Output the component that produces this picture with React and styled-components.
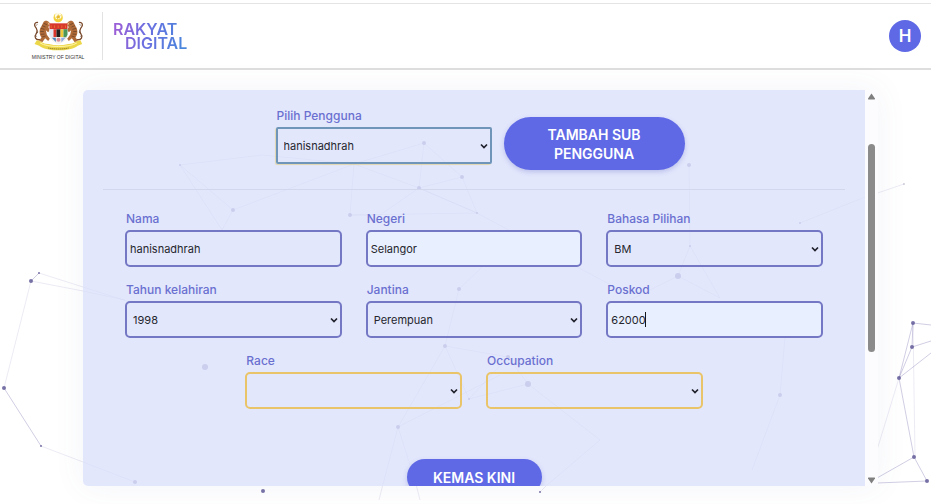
import { useId } from 'react';
import styled, { createGlobalStyle, css } from 'styled-components';

const GlobalStyle = createGlobalStyle`
  * {
    box-sizing: border-box;
  }
  body {
    margin: 0;
    background: #ffffff;
    font-family: Inter, 'Liberation Sans', sans-serif;
    overflow: hidden;
  }
`;

const Page = styled.div`
  position: relative;
  height: 100vh;
  padding: 3px 4px 18px 0;
  display: flex;
  flex-direction: column;
`;

const Network = styled.svg`
  position: absolute;
  inset: 0;
  width: 100%;
  height: 100%;
`;

const Header = styled.header`
  position: relative;
  flex: none;
  display: flex;
  align-items: center;
  height: 67px;
  padding: 0 10px 0 32px;
  background: #ffffff;
  border-top: 1px solid #e4e4e4;
  border-bottom: 2px solid #dedede;
`;

const Ministry = styled.div`
  display: flex;
  flex-direction: column;
  align-items: center;
  gap: 2px;
  width: 52px;
  font-family: 'Liberation Sans', sans-serif;
  font-size: 5px;
  line-height: 6px;
  color: #333333;
  white-space: nowrap;
`;

const Divider = styled.span`
  width: 1px;
  height: 48px;
  margin: 0 10px 0 18px;
  background: #e2e2e2;
`;

const Brand = styled.a`
  display: flex;
  flex-direction: column;
  font-size: 16px;
  line-height: 14px;
  font-weight: 600;
  text-decoration: none;
  color: transparent;
  background: linear-gradient(100deg, #9a5fd6 5%, #6a6fe0 45%, #4a86dc 95%);
  background-clip: text;

  span + span {
    padding-left: 12px;
  }
`;

const Avatar = styled.button`
  width: 32px;
  height: 32px;
  margin-left: auto;
  padding: 0;
  border: 0;
  border-radius: 50%;
  background: #5f69e6;
  color: #ffffff;
  font-family: inherit;
  font-size: 17px;
  font-weight: 600;
`;

const Panel = styled.main`
  position: relative;
  flex: 1;
  min-height: 0;
  display: flex;
  margin: 20px 53px 0 83px;
  border-radius: 5px;
  box-shadow: 0 0 32px rgba(90, 100, 160, 0.07);
`;

const Content = styled.div`
  flex: 1;
  overflow: hidden;
  padding: 18px 20px 0;
  border-radius: 5px 0 0 5px;
  background: rgba(221, 226, 251, 0.82);
`;

const Picker = styled.div`
  display: flex;
  justify-content: center;
  align-items: flex-start;
  gap: 12px;
  padding: 0 0 19px 12px;
  border-bottom: 1px solid #d3d7ee;
`;

const Form = styled.form`
  display: flex;
  flex-wrap: wrap;
  justify-content: center;
  gap: 15px 24px;
  padding: 21px 22px 0;
`;

const FieldBox = styled.div`
  display: flex;
  flex-direction: column;
  gap: 3px;
  width: ${(p) => (p.$fixed ? '216px' : 'calc((100% - 48px) / 3)')};
`;

const Label = styled.label`
  padding-left: 1px;
  font-size: 12px;
  line-height: 16px;
  font-weight: 500;
  color: #6a70d0;
  white-space: nowrap;
`;

const tones = {
  normal: css`
    border-color: #7478c4;
  `,
  missing: css`
    border-color: #e9c468;
  `,
  active: css`
    border-color: #6f95b8;
    border-radius: 2px;
    box-shadow: -1px 1px 1px rgba(226, 206, 120, 0.6);
  `,
};

const control = css`
  display: block;
  width: 100%;
  height: 37px;
  border: 2px solid;
  border-radius: 5px;
  outline: 0;
  background: ${(p) => (p.$filled ? '#e8effe' : 'transparent')};
  color: #25262e;
  font-family: inherit;
  font-size: 11px;
  ${(p) => tones[p.$tone || 'normal']}
`;

const Input = styled.input`
  ${control}
  padding: 0 3px;
`;

const Select = styled.select`
  ${control}
  padding: 0 20px 0 6px;
  appearance: none;
`;

const ControlWrap = styled.div`
  position: relative;
`;

const Chevron = styled.svg`
  position: absolute;
  top: 15px;
  right: 4px;
  pointer-events: none;
`;

const Caret = styled.span`
  position: absolute;
  top: 11px;
  left: 39px;
  width: 1px;
  height: 15px;
  background: #15161c;
`;

const Pill = styled.button`
  border: 0;
  border-radius: 27px;
  background: #5f69e6;
  color: #ffffff;
  font-family: inherit;
  font-size: 14px;
  font-weight: 600;
  line-height: 19px;
  box-shadow: 0 2px 5px rgba(80, 90, 190, 0.28);
`;

const AddButton = styled(Pill)`
  width: 181px;
  height: 53px;
  margin-top: 9px;
  padding: 0 36px;
`;

const Footer = styled.div`
  display: flex;
  justify-content: center;
  width: 100%;
  padding-top: 35px;
`;

const SaveButton = styled(Pill)`
  width: 135px;
  height: 36px;
  padding: 0;
`;

const Scrollbar = styled.div`
  display: flex;
  flex-direction: column;
  align-items: center;
  width: 13px;
  padding: 3px 0 2px;
  background: #fcfcfe;

  svg {
    flex: none;
  }
`;

const Space = styled.span`
  flex: ${(p) => p.$size};
`;

const Thumb = styled.span`
  flex: 208;
  width: 7px;
  border-radius: 4px;
  background: #8b8b8b;
`;

const nodes = [
  [31, 281, 2], [39, 273, 1], [4, 388, 2], [41, 446, 1], [135, 482, 2], [205, 367, 3],
  [263, 491, 2], [913, 323, 2], [912, 347, 2], [899, 378, 2], [914, 457, 2], [927, 481, 2],
  [424, 143, 2], [419, 188, 2], [462, 177, 2], [350, 215, 2], [233, 210, 2], [477, 213, 1],
  [689, 165, 2], [678, 276, 3], [690, 246, 1], [800, 223, 1], [459, 289, 2], [445, 346, 2],
  [398, 427, 2], [469, 399, 1], [508, 357, 2], [528, 384, 3], [780, 395, 2], [540, 492, 1],
  [180, 165, 1],
];

const panelLines = [
  'M424 143 419 188 462 177ZM424 143 354 164 262 155 180 165 233 210 354 164 350 215 477 213 419 188 354 164',
  'M419 188 380 215 350 215M419 188 477 213 620 290M180 165 222 230 233 210M462 177 477 213',
  'M689 165 690 246 678 276 610 310M678 276 720 298 690 246M800 223 860 199',
  'M459 289 445 346 508 357M459 289 500 250M445 346 469 399 528 384 508 357 469 399',
  'M445 346 398 427 500 375M398 427 383 484M398 427 416 484M528 384 600 440 547 485',
  'M785 338 780 395 752 470M83 287 127 301M83 291 125 300M83 462 135 482',
];

const faintLines = [
  'M31 281 4 388M39 273 83 287M31 281 83 291M41 446 83 462M860 199 904 184',
  'M383 484 379 500M416 484 420 500M547 485 540 492M899 378 877 450M913 323 915 457',
];

const strongLines = [
  'M31 281 39 273M4 388 41 446',
  'M913 323 912 347 899 378ZM913 323 931 325M912 347 931 341M899 378 931 353',
  'M899 378 914 457 927 481 877 483M914 457 877 478',
];

function Background() {
  return (
    <Network viewBox="0 0 935 504" preserveAspectRatio="xMidYMid slice" aria-hidden="true">
      <path d={panelLines.join('')} fill="none" stroke="#55508f" strokeOpacity="0.18" />
      <path d={faintLines.join('')} fill="none" stroke="#6c67a8" strokeOpacity="0.13" />
      <path d={strongLines.join('')} fill="none" stroke="#6c67a8" strokeOpacity="0.32" />
      {nodes.map(([x, y, r]) => (
        <circle key={`${x}-${y}`} cx={x} cy={y} r={r} fill="#625c98" fillOpacity="0.85" />
      ))}
      <circle cx="904" cy="184" r="1" fill="#625c98" fillOpacity="0.3" />
    </Network>
  );
}

function Tiger() {
  return (
    <g>
      <path
        d="M56 119C45 121 39 110 45 103C52 94 49 87 43 80C39 73 43 66 50 67"
        fill="none"
        stroke="#7b4a2c"
        strokeWidth="4"
        strokeLinecap="round"
      />
      <path
        d="M67 68C71 60 80 61 86 68L91 76L82 80L87 90L82 97L75 91L78 104L87 116L82 123L73 115L65 126L54 124L62 112C54 103 55 88 61 80Z"
        fill="#b06a38"
      />
      <path
        d="M69 70L78 74M64 77L74 81M60 85L71 88M58 94L69 95M60 103L71 102M64 111L74 108M46 76L50 73M47 99L52 96M43 108L48 109"
        stroke="#5b3924"
        strokeWidth="2"
      />
      <path d="M80 67L88 71L84 76Z" fill="#f1c58e" />
    </g>
  );
}

function Crest() {
  return (
    <svg width="51" height="40" viewBox="37 36 152 120" role="img" aria-label="Jata Negara">
      <circle cx="112" cy="53" r="14" fill="#f2d33c" />
      <circle cx="112" cy="48" r="10" fill="#fffbe2" />
      <path d="M112 42L114 47L120 46L116 51L119 56L113 54L110 59L109 53L103 52L109 49Z" fill="#e6b92b" />
      <Tiger />
      <g transform="matrix(-1 0 0 1 226 0)">
        <Tiger />
      </g>
      <path d="M86 72H140V104C140 119 127 127 113 133C99 127 86 119 86 104Z" fill="#f5f1ee" />
      <path d="M86 70H140V88H86Z" fill="#d7372c" />
      <path d="M91 76V84M101 76V84M112 76V84M123 76V84M134 76V84" stroke="#e88a2f" strokeWidth="2" />
      <path d="M86 88H98V112H90L86 104Z" fill="#e3e8f3" />
      <path d="M98 88H107V111H98Z" fill="#d9352d" />
      <path d="M107 88H119V111H107Z" fill="#23201f" />
      <path d="M119 88H128V111H119Z" fill="#f0ca3b" />
      <path d="M128 88H140V104L136 112H128Z" fill="#4d965a" />
      <path d="M93 113H105V126Z" fill="#4d83bd" />
      <circle cx="113" cy="119" r="6" fill="#d98a94" />
      <path d="M121 113H134L122 127Z" fill="#93aee0" />
      <path
        d="M48 121C61 122 65 133 84 132C102 137 123 137 142 132C161 133 165 122 179 121L184 132L171 137C157 147 137 151 113 151C89 151 69 147 55 137L41 132Z"
        fill="#ecd64a"
      />
      <path d="M58 129C79 143 147 143 168 129" fill="none" stroke="#fff5a9" strokeWidth="3" />
      <path d="M82 144C102 148 124 148 144 144" fill="none" stroke="#917b26" strokeWidth="3" strokeDasharray="4 2" />
    </svg>
  );
}

function Field({ label, value, type = 'input', fixed, tone, filled, caret }) {
  const id = useId();
  return (
    <FieldBox $fixed={fixed}>
      <Label htmlFor={id}>{label}</Label>
      <ControlWrap>
        {type === 'select' ? (
          <>
            <Select id={id} defaultValue={value} $tone={tone}>
              <option>{value}</option>
            </Select>
            <Chevron width="8" height="8" viewBox="0 0 8 8" aria-hidden="true">
              <path d="M1 2.500L4 5.500L7 2.500" fill="none" stroke="#20212b" strokeWidth="1.700" />
            </Chevron>
          </>
        ) : (
          <Input id={id} defaultValue={value} $tone={tone} $filled={filled} />
        )}
        {caret && <Caret />}
      </ControlWrap>
    </FieldBox>
  );
}

export default function App() {
  return (
    <>
      <GlobalStyle />
      <Page>
        <Background />
        <Header>
          <Ministry>
            <Crest />
            MINISTRY OF DIGITAL
          </Ministry>
          <Divider />
          <Brand href="#">
            <span>RAKYAT</span>
            <span>DIGITAL</span>
          </Brand>
          <Avatar type="button">H</Avatar>
        </Header>
        <Panel>
          <Content>
            <Picker>
              <Field label="Pilih Pengguna" type="select" value="hanisnadhrah" tone="active" fixed />
              <AddButton type="button">TAMBAH SUB PENGGUNA</AddButton>
            </Picker>
            <Form>
              <Field label="Nama" value="hanisnadhrah" />
              <Field label="Negeri" value="Selangor" filled />
              <Field label="Bahasa Pilihan" type="select" value="BM" />
              <Field label="Tahun kelahiran" type="select" value="1998" />
              <Field label="Jantina" type="select" value="Perempuan" />
              <Field label="Poskod" value="62000" filled caret />
              <Field label="Race" type="select" value="" tone="missing" />
              <Field label="Occupation" type="select" value="" tone="missing" />
              <Footer>
                <SaveButton type="button">KEMAS KINI</SaveButton>
              </Footer>
            </Form>
          </Content>
          <Scrollbar aria-hidden="true">
            <svg width="9" height="7" viewBox="0 0 9 7">
              <path d="M4.500 0.500L8 5.500Q8.300 6.500 7.300 6.500H1.700Q0.700 6.500 1 5.500Z" fill="#808080" />
            </svg>
            <Space $size={44} />
            <Thumb />
            <Space $size={125} />
            <svg width="9" height="7" viewBox="0 0 9 7">
              <path d="M4.500 6.500L8 1.500Q8.300 0.500 7.300 0.500H1.700Q0.700 0.500 1 1.500Z" fill="#808080" />
            </svg>
          </Scrollbar>
        </Panel>
      </Page>
    </>
  );
}
